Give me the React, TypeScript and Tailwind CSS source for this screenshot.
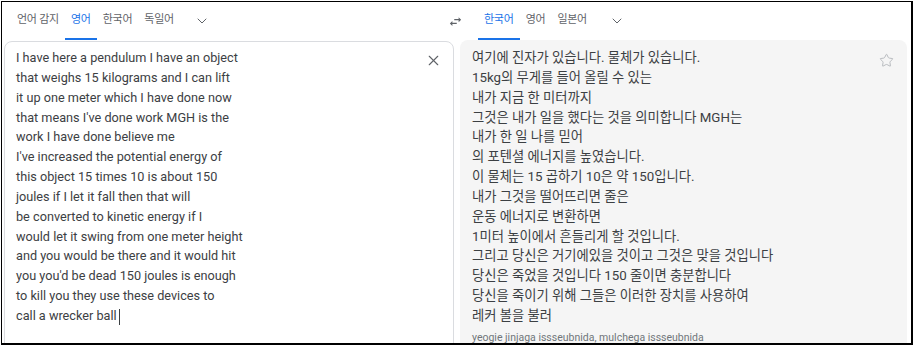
import { X, Star, ChevronDown } from "lucide-react";

const sourceLines = [
  "I have here a pendulum I have an object",
  "that weighs 15 kilograms and I can lift",
  "it up one meter which I have done now",
  "that means I've done work MGH is the",
  "work I have done believe me",
  "I've increased the potential energy of",
  "this object 15 times 10 is about 150",
  "joules if I let it fall then that will",
  "be converted to kinetic energy if I",
  "would let it swing from one meter height",
  "and you would be there and it would hit",
  "you you'd be dead 150 joules is enough",
  "to kill you they use these devices to",
];

const targetLines = [
  "여기에 진자가 있습니다. 물체가 있습니다.",
  "15kg의 무게를 들어 올릴 수 있는",
  "내가 지금 한 미터까지",
  "그것은 내가 일을 했다는 것을 의미합니다 MGH는",
  "내가 한 일 나를 믿어",
  "의 포텐셜 에너지를 높였습니다.",
  "이 물체는 15 곱하기 10은 약 150입니다.",
  "내가 그것을 떨어뜨리면 줄은",
  "운동 에너지로 변환하면",
  "1미터 높이에서 흔들리게 할 것입니다.",
  "그리고 당신은 거기에있을 것이고 그것은 맞을 것입니다",
  "당신은 죽었을 것입니다 150 줄이면 충분합니다",
  "당신을 죽이기 위해 그들은 이러한 장치를 사용하여",
  "레커 볼을 불러",
];

function Tab({ label, active }: { label: string; active?: boolean }) {
  return (
    <div
      className={
        active
          ? "h-full flex items-center px-[6px] border-b-2 border-[#1a73e8] text-[#1a73e8]"
          : "h-full flex items-center px-[6px] border-b-2 border-transparent text-[#5f6368]"
      }
    >
      {label}
    </div>
  );
}

function SwapIcon() {
  return (
    <svg width="15" height="15" viewBox="0 0 24 24" fill="#5f6368">
      <path d="M6.99 11L3 15l3.99 4v-3H14v-2H6.99v-3zM21 9l-3.99-4v3H10v2h7.01v3L21 9z" />
    </svg>
  );
}

export default function App() {
  return (
    <div className="w-[917px] h-[349px] bg-white pt-px pl-px font-[Roboto,'Noto_Sans_CJK_KR',sans-serif]">
      <div className="w-[912px] h-[344px] border-l border-t border-r-2 border-b-2 border-black overflow-hidden">
        {/* language bar */}
        <div className="flex h-[38px] text-[11px] tracking-[-0.25px]">
          <div className="w-[438px] flex items-center pl-[9px] h-full">
            <Tab label="언어 감지" />
            <Tab label="영어" active />
            <Tab label="한국어" />
            <Tab label="독일어" />
            <div className="ml-[10px] w-6 h-6 flex items-center justify-center text-[#5f6368]">
              <ChevronDown className="w-4 h-4" strokeWidth={1.5} />
            </div>
          </div>
          <div className="w-[30px] flex items-center justify-center">
            <SwapIcon />
          </div>
          <div className="flex items-center pl-[8px] h-full">
            <Tab label="한국어" active />
            <Tab label="영어" />
            <Tab label="일본어" />
            <div className="ml-[12px] w-6 h-6 flex items-center justify-center text-[#5f6368]">
              <ChevronDown className="w-4 h-4" strokeWidth={1.5} />
            </div>
          </div>
        </div>

        {/* panels */}
        <div className="flex items-start gap-[6px] pl-[2px]">
          <div className="mt-px w-[450px] h-[320px] border border-[#dadce0] rounded-lg flex pt-[6px] pl-[11px] pr-[8px]">
            <div className="flex-1 text-[12.7px] leading-[19.85px] text-[#3c4043]">
              {sourceLines.map((l, i) => (
                <div key={i}>{l}</div>
              ))}
              <div>
                call a wrecker ball
                <span className="inline-block align-middle ml-[2px] w-px h-[16px] bg-[#3c4043]" />
              </div>
            </div>
            <div className="w-6 h-6 flex items-center justify-center text-[#5f6368]">
              <X className="w-[17px] h-[17px]" strokeWidth={1.6} />
            </div>
          </div>

          <div className="w-[447px] h-[320px] bg-[#f5f5f5] rounded-lg flex pt-[8px] pl-[12px] pr-[9px]">
            <div className="flex-1 text-[13.3px] leading-[19.85px] text-[#3c4043]">
              {targetLines.map((l, i) => (
                <div key={i}>{l}</div>
              ))}
              <div className="mt-[5px] text-[10.5px] leading-[14px] text-[#70757a]">
                yeogie jinjaga issseubnida, mulchega issseubnida
              </div>
            </div>
            <div className="w-6 h-6 flex items-center justify-center text-[#b0b4b8]">
              <Star className="w-[15px] h-[15px]" strokeWidth={1.4} />
            </div>
          </div>
        </div>
      </div>
    </div>
  );
}
